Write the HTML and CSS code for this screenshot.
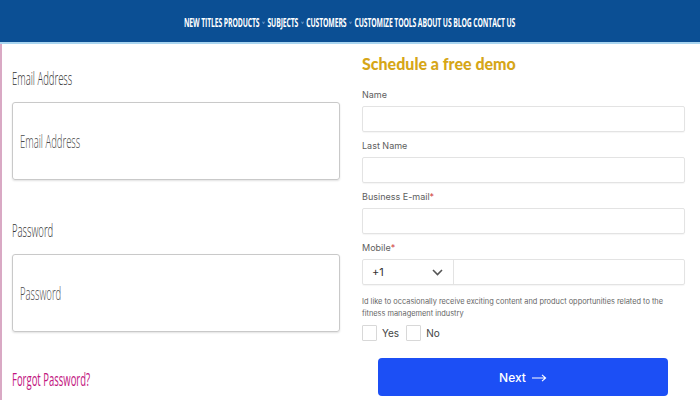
FILE: index.html
```
<!DOCTYPE html>
<html>
<head>
<meta charset="utf-8">
<link rel="stylesheet" href="styles.css">
</head>
<body>
<header class="topbar">
  <nav class="nav"><span class="nav-inner">NEW TITLES PRODUCTS <span class="caret">⌄</span> SUBJECTS <span class="caret">⌄</span> CUSTOMERS <span class="caret">⌄</span> CUSTOMIZE TOOLS ABOUT US BLOG CONTACT US</span></nav>
</header>
<main class="page">
  <section class="login">
    <label class="big-label"><span class="sq">Email Address</span></label>
    <div class="big-input"><span class="sq placeholder">Email Address</span></div>
    <label class="big-label pw-label"><span class="sq">Password</span></label>
    <div class="big-input"><span class="sq placeholder">Password</span></div>
    <a class="forgot"><span class="sq">Forgot Password?</span></a>
  </section>
  <section class="demo">
    <h2 class="demo-title">Schedule a free demo</h2>
    <div class="field first">
      <div class="f-label">Name</div>
      <div class="f-input"></div>
    </div>
    <div class="field">
      <div class="f-label">Last Name</div>
      <div class="f-input"></div>
    </div>
    <div class="field">
      <div class="f-label">Business E-mail<span class="req">*</span></div>
      <div class="f-input"></div>
    </div>
    <div class="field">
      <div class="f-label">Mobile<span class="req">*</span></div>
      <div class="f-input phone">
        <div class="code"><span>+1</span>
          <svg class="chev" width="11" height="7" viewBox="0 0 11 7"><path d="M1 1l4.5 4.5L10 1" fill="none" stroke="#555" stroke-width="1.6"/></svg>
        </div>
        <div class="num"></div>
      </div>
    </div>
    <p class="consent">Id like to occasionally receive exciting content and product opportunities related to the fitness management industry</p>
    <div class="choices">
      <span class="box"></span><span class="opt">Yes</span>
      <span class="box"></span><span class="opt">No</span>
    </div>
    <button class="next">Next <svg class="arrow" width="15" height="8" viewBox="0 0 15 8"><path d="M0 4h13.5M10 0.8L13.6 4 10 7.2" fill="none" stroke="#fff" stroke-width="1.1"/></svg></button>
  </section>
</main>
</body>
</html>
```
FILE: styles.css
```
* { box-sizing: border-box; }
html, body { margin: 0; padding: 0; }
body {
  width: 700px;
  height: 400px;
  overflow: hidden;
  background: #fff;
  font-family: Inter, "Noto Sans", sans-serif;
}
.topbar {
  height: 44px;
  background: #0b4f94;
  border-bottom: 2px solid #a9d5f0;
  display: flex;
  align-items: center;
  justify-content: center;
}
.nav {
  color: #fff;
  font-family: "Open Sans", sans-serif;
  font-weight: 700;
  font-size: 13px;
  white-space: nowrap;
  display: flex;
  justify-content: center;
  width: 100%;
}
.nav-inner {
  display: inline-block;
  transform: scaleX(0.525);
  transform-origin: center;
  letter-spacing: -0.2px;
  margin-top: 1px;
}
.caret { color: #7fa7d3; font-size: 11px; font-weight: 400; position: relative; top: -3px; }
.page {
  display: grid;
  grid-template-columns: 360px 1fr;
  height: 356px;
  border-left: 2px solid #d9a9c4;
}
.login { padding: 22px 0 0 10px; }
.sq {
  display: inline-block;
  transform: scaleX(0.5);
  transform-origin: left center;
  white-space: nowrap;
}
.big-label {
  display: block;
  font-family: "Open Sans", sans-serif;
  font-weight: 300;
  font-size: 19px;
  line-height: 24px;
  color: #333;
  height: 24px;
}
.pw-label { margin-top: 38px; }
.big-input {
  margin-top: 12px;
  width: 328px;
  height: 78px;
  border: 1px solid #c9c9c9;
  border-radius: 3px;
  box-shadow: 0 1px 2px rgba(0,0,0,0.12);
  display: flex;
  align-items: center;
  padding-left: 7px;
  font-family: "Open Sans", sans-serif;
  font-weight: 300;
  font-size: 19px;
  color: #4a4a4a;
}
.forgot {
  display: block;
  margin-top: 35px;
  font-family: "Open Sans", sans-serif;
  font-size: 19px;
  line-height: 24px;
  color: #c2157f;
}
.demo { padding: 9px 15px 0 0; }
.demo-title {
  margin: 0;
  font-family: Lato, sans-serif;
  font-weight: 900;
  font-size: 16px;
  line-height: 22px;
  color: #d6a618;
  letter-spacing: 0;
}
.field { margin-top: 8px; }
.field.first { margin-top: 14px; }
.f-label {
  font-size: 9px;
  font-weight: 400;
  line-height: 12px;
  color: #5e5e5e;
  margin-bottom: 5px;
}
.req { color: #d04040; }
.f-input {
  height: 26px;
  border: 1px solid #e3e3e3;
  border-radius: 2px;
  box-shadow: 0 1px 1px rgba(0,0,0,0.04);
}
.phone { display: flex; }
.code {
  width: 91px;
  border-right: 1px solid #e3e3e3;
  display: flex;
  align-items: center;
  justify-content: space-between;
  padding: 0 10px 0 9px;
  font-size: 11px;
  color: #333;
}
.num { flex: 1; }
.consent {
  margin: 11px 0 0;
  width: 306px;
  font-size: 7.4px;
  line-height: 12px;
  color: #666;
}
.choices {
  display: flex;
  align-items: center;
  margin-top: 5px;
  font-size: 10px;
  color: #444;
}
.box {
  width: 15px;
  height: 16px;
  border: 1px solid #d8d8d8;
  border-radius: 1px;
}
.opt { margin: 0 7px 0 5px; }
.next {
  display: flex;
  align-items: center;
  justify-content: center;
  gap: 6px;
  margin: 17px 0 0 16px;
  width: 290px;
  height: 38px;
  border: none;
  border-radius: 4px;
  background: #1c4ff5;
  color: #fff;
  font-family: Inter, sans-serif;
  font-weight: 500;
  font-size: 12px;
  padding: 0;
}
.arrow { margin-top: 1px; }
```
